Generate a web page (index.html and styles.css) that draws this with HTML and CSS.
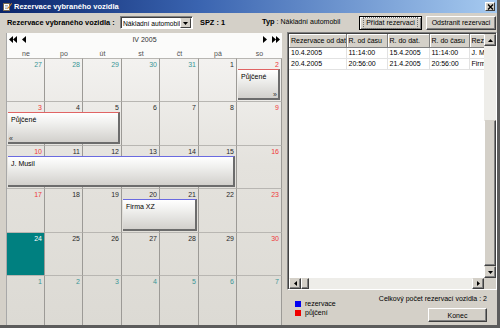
FILE: index.html
```html
<!DOCTYPE html>
<html lang="cs">
<head>
    <meta charset="UTF-8">
    <title>Rezervace vybraného vozidla</title>
    <link rel="stylesheet" href="styles.css">
</head>
<body>
    <div class="window">
        <div class="titlebar">
            <svg class="appicon" width="9" height="9" viewBox="0 0 9 9">
                <rect x="0.5" y="1.5" width="6" height="7" fill="#fff" stroke="#7a6a50"/>
                <path d="M2 3.5h3M2 5h3M2 6.5h2" stroke="#8090a0" stroke-width="0.7"/>
                <path d="M4 6.5 L8.5 1 L9 1.8 L4.8 7.2 Z" fill="#e08a20"/>
            </svg>
            <span class="title">Rezervace vybraného vozidla</span>
            <span class="closebtn">
                <svg width="7" height="6" viewBox="0 0 7 6"><path d="M1 0.5 L6 5.5 M6 0.5 L1 5.5" stroke="#000" stroke-width="1.4"/></svg>
            </span>
        </div>

        <div class="toolbar">
            <span class="lbl bold">Rezervace vybraného vozidla :</span>
            <div class="select">
                <span class="select-text">Nákladní automobil</span>
                <span class="select-btn"><svg width="5" height="3" viewBox="0 0 5 3"><path d="M0 0h5L2.5 3z" fill="#000"/></svg></span>
            </div>
            <span class="spz bold">SPZ : 1</span>
            <span class="typ"><b>Typ</b> : Nákladní automobil</span>
            <button class="btn focused"><span>Přidat rezervaci</span></button>
            <button class="btn wide"><span>Odstranit rezervaci</span></button>
        </div>

        <div class="main">
            <div class="calendar">
                <div class="nav">
                    <span class="arrows">
                        <svg width="8" height="7" viewBox="0 0 8 7"><path d="M4 0v7L0 3.5zM8 0v7L4 3.5z" fill="#000"/></svg>
                        <svg class="gap" width="4" height="7" viewBox="0 0 4 7"><path d="M4 0v7L0 3.5z" fill="#000"/></svg>
                    </span>
                    <span class="month">IV 2005</span>
                    <span class="arrows">
                        <svg width="4" height="7" viewBox="0 0 4 7"><path d="M0 0v7L4 3.5z" fill="#000"/></svg>
                        <svg class="gap" width="8" height="7" viewBox="0 0 8 7"><path d="M0 0v7L4 3.5zM4 0v7L8 3.5z" fill="#000"/></svg>
                    </span>
                </div>
                <div class="dayhead">
                    <span>ne</span><span>po</span><span>út</span><span>st</span><span>čt</span><span>pá</span><span>so</span>
                </div>
                <div class="weeks">
                    <div class="week">
                        <div class="day other">27</div>
                        <div class="day other">28</div>
                        <div class="day other">29</div>
                        <div class="day other">30</div>
                        <div class="day other">31</div>
                        <div class="day">1</div>
                        <div class="day wknd">2</div>
                        <div class="event lent" style="grid-column: 7 / 8">Půjčené<span class="more">»</span></div>
                    </div>
                    <div class="week">
                        <div class="day wknd">3</div>
                        <div class="day">4</div>
                        <div class="day">5</div>
                        <div class="day">6</div>
                        <div class="day">7</div>
                        <div class="day">8</div>
                        <div class="day wknd">9</div>
                        <div class="event lent" style="grid-column: 1 / 4">Půjčené<span class="less">«</span></div>
                    </div>
                    <div class="week">
                        <div class="day wknd">10</div>
                        <div class="day">11</div>
                        <div class="day">12</div>
                        <div class="day">13</div>
                        <div class="day">14</div>
                        <div class="day">15</div>
                        <div class="day wknd">16</div>
                        <div class="event reserved" style="grid-column: 1 / 7">J. Musil</div>
                    </div>
                    <div class="week">
                        <div class="day wknd">17</div>
                        <div class="day">18</div>
                        <div class="day">19</div>
                        <div class="day">20</div>
                        <div class="day">21</div>
                        <div class="day">22</div>
                        <div class="day wknd">23</div>
                        <div class="event reserved" style="grid-column: 4 / 6">Firma XZ</div>
                    </div>
                    <div class="week">
                        <div class="day today">24</div>
                        <div class="day">25</div>
                        <div class="day">26</div>
                        <div class="day">27</div>
                        <div class="day">28</div>
                        <div class="day">29</div>
                        <div class="day wknd">30</div>
                    </div>
                    <div class="week last">
                        <div class="day other">1</div>
                        <div class="day other">2</div>
                        <div class="day other">3</div>
                        <div class="day other">4</div>
                        <div class="day other">5</div>
                        <div class="day other">6</div>
                        <div class="day other">7</div>
                    </div>
                </div>
            </div>

            <div class="side">
                <div class="list">
                    <div class="list-body">
                        <table class="grid">
                            <colgroup>
                                <col style="width: 57px"><col style="width: 41px"><col style="width: 42px"><col style="width: 40px"><col style="width: 16px">
                            </colgroup>
                            <thead>
                                <tr><th>Rezervace od dat.</th><th>R. od času</th><th>R. do dat.</th><th>R. do času</th><th>Rez</th></tr>
                            </thead>
                            <tbody>
                                <tr><td>10.4.2005</td><td>11:14:00</td><td>15.4.2005</td><td>11:14:00</td><td>J. M</td></tr>
                                <tr><td>20.4.2005</td><td>20:56:00</td><td>21.4.2005</td><td>20:56:00</td><td>Firma</td></tr>
                            </tbody>
                        </table>
                    </div>
                    <div class="vscroll">
                        <span class="sbtn"><svg width="5" height="3" viewBox="0 0 5 3"><path d="M0 3h5L2.5 0z" fill="#000"/></svg></span>
                        <span class="track top"></span>
                        <span class="thumb"></span>
                        <span class="sbtn"><svg width="5" height="3" viewBox="0 0 5 3"><path d="M0 0h5L2.5 3z" fill="#000"/></svg></span>
                    </div>
                    <div class="hscroll">
                        <span class="sbtn"><svg width="3" height="5" viewBox="0 0 3 5"><path d="M3 0v5L0 2.5z" fill="#000"/></svg></span>
                        <span class="thumb"></span>
                        <span class="track"></span>
                        <span class="sbtn"><svg width="3" height="5" viewBox="0 0 3 5"><path d="M0 0v5L3 2.5z" fill="#000"/></svg></span>
                    </div>
                    <div class="corner"></div>
                </div>

                <div class="footer">
                    <div class="legend">
                        <div class="legend-row"><span class="swatch blue"></span>rezervace</div>
                        <div class="legend-row"><span class="swatch red"></span>půjčení</div>
                    </div>
                    <div class="summary">
                        <span>Celkový počet rezervací vozidla : 2</span>
                        <button class="btn konec"><span>Konec</span></button>
                    </div>
                </div>
            </div>
        </div>
    </div>
</body>
</html>
```

FILE: styles.css
```css
* { box-sizing: border-box; }
body { margin: 0; font-family: "Liberation Sans", Arial, sans-serif; font-size: 7px; color: #000; background: #d4d0c8; }
.bold { font-weight: bold; font-size: 7.4px; }

.window {
    width: 500px;
    height: 328px;
    background: #d4d0c8;
    border-right: 3px solid #5c5c5c;
    border-bottom: 3px solid #5c5c5c;
    display: flex;
    flex-direction: column;
    overflow: hidden;
}

/* title bar */
.titlebar {
    height: 13px;
    display: flex;
    align-items: center;
    padding-left: 3px;
    background: linear-gradient(to right, #0a246a, #3a64b0 40%, #a6caf0);
    color: #fff;
}
.appicon { margin-right: 2px; }
.title { font-weight: bold; font-size: 7.5px; }
.closebtn {
    margin-left: auto;
    margin-right: 2px;
    width: 10px;
    height: 9px;
    background: #d4d0c8;
    border: 1px solid;
    border-color: #fff #404040 #404040 #fff;
    display: flex;
    align-items: center;
    justify-content: center;
}

/* top row */
.toolbar {
    height: 19px;
    display: flex;
    align-items: center;
    padding-left: 7px;
    white-space: nowrap;
}
.lbl { width: 113px; }
.select {
    width: 73px;
    height: 13px;
    background: #fff;
    border: 1px solid;
    border-color: #808080 #fff #fff #808080;
    box-shadow: inset 1px 1px #404040;
    display: flex;
    align-items: center;
    padding: 1px 1px 0 2px;
}
.select-text { flex: 1; font-size: 6.7px; overflow: hidden; }
.select-btn {
    flex: none;
    width: 11px;
    height: 10px;
    background: #d4d0c8;
    border: 1px solid;
    border-color: #d4d0c8 #404040 #404040 #fff;
    display: flex;
    align-items: center;
    justify-content: center;
}
.spz { width: 62px; margin-left: 7px; }
.typ { width: 97px; margin-top: -3px; }
.typ b { font-size: 7.4px; }

.btn {
    font: inherit;
    width: 63px;
    height: 14px;
    padding: 0;
    background: #d4d0c8;
    border: 1px solid;
    border-color: #fff #404040 #404040 #fff;
    box-shadow: inset -1px -1px #808080;
    display: flex;
    align-items: center;
    justify-content: center;
    color: #000;
}
.btn.focused { border-color: #000; box-shadow: inset 1px 1px #fff, inset -1px -1px #808080; margin-right: 4px; }
.btn.focused span { outline: 1px dotted #707070; outline-offset: 1px; padding: 0 1px; line-height: 8px; }
.btn.wide { width: 70px; }

/* calendar */
.main { flex: 1; display: flex; }
.calendar {
    margin: 1px 5px 0 6px;
    width: 276px;
    border-left: 1px solid #a8a8a8;
    display: flex;
    flex-direction: column;
    background: #fbfbfa;
}
.nav {
    height: 13px;
    display: flex;
    align-items: center;
    justify-content: space-between;
    padding: 0 2px 0 2px;
}
.arrows { display: flex; align-items: center; }
.arrows .gap { margin-left: 5px; }
.month { color: #303030; }
.dayhead {
    height: 12px;
    display: grid;
    grid-template-columns: 38px 38px 39px 38px 39px 38px 45px;
    align-items: end;
    padding-bottom: 1px;
    color: #505050;
}
.dayhead span { text-align: center; }

.weeks {
    flex: 1;
    display: flex;
    flex-direction: column;
    background: linear-gradient(#f3f2f0, #e4e2dd 40%, #dcdad4);
}
.week {
    height: 43.4px;
    display: grid;
    grid-template-columns: 38px 38px 39px 38px 39px 38px 45px;
    grid-template-rows: 11px 1fr;
}
.week.last { flex: 1; }
.day {
    grid-row: 1 / 3;
    border-top: 1px solid #b8b6b2;
    border-right: 1px solid #9c9a96;
    text-align: right;
    padding: 1px 2px 0 0;
    line-height: 9px;
    color: #2a2a2a;
}
.day:nth-child(1) { grid-column: 1; }
.day:nth-child(2) { grid-column: 2; }
.day:nth-child(3) { grid-column: 3; }
.day:nth-child(4) { grid-column: 4; }
.day:nth-child(5) { grid-column: 5; }
.day:nth-child(6) { grid-column: 6; }
.day:nth-child(7) { grid-column: 7; }
.day.other { color: #3a9696; }
.day.wknd { color: #ef3a3a; }
.day.today { background: #008080; color: #fff; }

.event {
    grid-row: 2;
    z-index: 1;
    position: relative;
    margin: 0 2px 1px 1px;
    padding: 3px 3px;
    background: linear-gradient(#ffffff, #f0f0ee 35%, #d2d0cc);
    border-top: 1px solid;
    border-right: 2px solid #6c6c6c;
    border-bottom: 2px solid #6c6c6c;
    white-space: nowrap;
    overflow: hidden;
}
.event.lent { border-top-color: #e06464; }
.event.reserved { border-top-color: #6a6ae0; }
.more, .less { position: absolute; bottom: 0; font-size: 7px; line-height: 7px; color: #303030; }
.more { right: 1px; }
.less { left: 1px; }

/* reservation list */
.side { width: 210px; display: flex; flex-direction: column; }
.list {
    height: 258px;
    border: 1px solid;
    border-color: #808080 #fff #fff #808080;
    box-shadow: inset 1px 1px #404040;
    padding: 1px 0 0 1px;
    display: grid;
    grid-template-columns: 1fr 12px;
    grid-template-rows: 1fr 11px;
    background: #fff;
}
.list-body { overflow: hidden; }
.grid { border-collapse: collapse; table-layout: fixed; width: 196px; }
.grid th, .grid td {
    font-weight: normal;
    text-align: left;
    white-space: nowrap;
    overflow: hidden;
    padding: 0 0 0 2px;
}
.grid th {
    height: 13px;
    background: #d4d0c8;
    border-right: 1px solid #808080;
    border-bottom: 1px solid #808080;
    box-shadow: inset 1px 1px #fff;
}
.grid td {
    height: 11px;
    border-right: 1px solid #e2e2e2;
    border-bottom: 1px solid #e2e2e2;
}

.vscroll, .hscroll { display: flex; background: #eeede9; }
.vscroll { flex-direction: column; }
.sbtn {
    flex: none;
    width: 12px;
    height: 12px;
    background: #d4d0c8;
    border: 1px solid;
    border-color: #d4d0c8 #404040 #404040 #fff;
    box-shadow: inset -1px -1px #808080;
    display: flex;
    align-items: center;
    justify-content: center;
}
.hscroll .sbtn { height: 11px; }
.vscroll .track.top { height: 74px; flex: none; }
.vscroll .thumb { flex: 1; }
.hscroll .thumb { width: 8px; flex: none; }
.hscroll .track { flex: 1; }
.thumb {
    background: #d4d0c8;
    border: 1px solid;
    border-color: #d4d0c8 #404040 #404040 #fff;
    box-shadow: inset -1px -1px #808080;
}
.corner { background: #d4d0c8; }

/* footer */
.footer {
    flex: 1;
    display: flex;
    justify-content: space-between;
    padding: 0 10px 0 8px;
}
.legend { padding-top: 9px; }
.legend-row { display: flex; align-items: center; height: 9px; }
.swatch { width: 6px; height: 6px; margin-right: 4px; }
.swatch.blue { background: #0000f0; }
.swatch.red { background: #f00000; }
.summary {
    display: flex;
    flex-direction: column;
    align-items: flex-end;
    padding-top: 5px;
}
.btn.konec { width: 59px; margin-top: 6px; }
```
